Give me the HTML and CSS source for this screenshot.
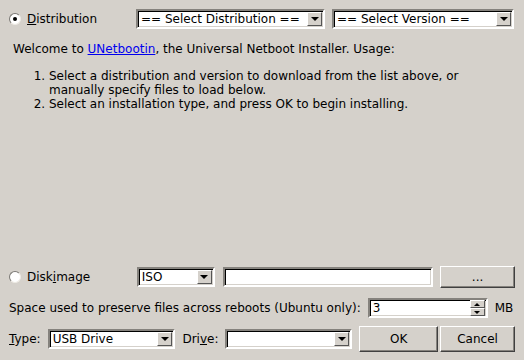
FILE: index.html
```html
<!DOCTYPE html>
<html>
<head>
<meta charset="utf-8">
<link rel="stylesheet" href="styles.css">
</head>
<body>
<div class="dialog">
  <div class="row top">
    <label class="radio-label w-dist"><span class="radio checked"></span><span><u>D</u>istribution</span></label>
    <div class="combo w-sel-dist"><span class="combo-text">== Select Distribution ==</span><span class="combo-btn"><span class="tri"></span></span></div>
    <div class="combo w-sel-ver"><span class="combo-text">== Select Version ==</span><span class="combo-btn"><span class="tri"></span></span></div>
  </div>
  <div class="desc">
    <p class="welcome">Welcome to <a href="#">UNetbootin</a>, the Universal Netboot Installer. Usage:</p>
    <ol class="steps">
      <li>Select a distribution and version to download from the list above, or manually specify files to load below.</li>
      <li>Select an installation type, and press OK to begin installing.</li>
    </ol>
  </div>
  <div class="spacer"></div>
  <div class="row disk">
    <label class="radio-label w-dist"><span class="radio"></span><span>Disk<u>i</u>mage</span></label>
    <div class="combo w-iso"><span class="combo-text">ISO</span><span class="combo-btn"><span class="tri"></span></span></div>
    <div class="field w-path"></div>
    <div class="button w-browse">...</div>
  </div>
  <div class="row space">
    <span class="label">Space used to preserve files across reboots (Ubuntu only):</span>
    <div class="spin">
      <span class="spin-text">3</span>
      <span class="spin-btns"><span class="spin-btn"><span class="tri up"></span></span><span class="spin-btn"><span class="tri small"></span></span></span>
    </div>
    <span class="label mb">MB</span>
  </div>
  <div class="row type">
    <span class="label"><u>T</u>ype:</span>
    <div class="combo w-type"><span class="combo-text">USB Drive</span><span class="combo-btn"><span class="tri"></span></span></div>
    <span class="label">Dri<u>v</u>e:</span>
    <div class="combo w-drive"><span class="combo-text"></span><span class="combo-btn"><span class="tri"></span></span></div>
    <div class="button w-ok">OK</div>
    <div class="button w-cancel">Cancel</div>
  </div>
</div>
</body>
</html>
```
FILE: styles.css
```css
html, body {
  margin: 0;
  padding: 0;
  width: 524px;
  height: 360px;
  background: #d5d1cb;
  font-family: "DejaVu Sans", sans-serif;
  font-size: 12px;
  color: #000;
  overflow: hidden;
}
.dialog {
  box-sizing: border-box;
  height: 360px;
  padding: 9px 9px 8px 9px;
  display: flex;
  flex-direction: column;
}
.row {
  display: flex;
  align-items: center;
}
.top { height: 20px; gap: 7px; }
.radio-label {
  display: flex;
  align-items: center;
  gap: 6px;
  box-sizing: border-box;
  padding-left: 0;
}
.w-dist { width: 120px; }
.radio {
  box-sizing: border-box;
  width: 12px;
  height: 12px;
  border-radius: 50%;
  background: #fff;
  border: 1px solid #7a7874;
  border-right-color: #eeeae4;
  border-bottom-color: #eeeae4;
  position: relative;
}
.radio.checked::after {
  content: "";
  position: absolute;
  left: 3px;
  top: 3px;
  width: 4px;
  height: 4px;
  border-radius: 50%;
  background: #000;
}
.combo, .field, .spin {
  box-sizing: border-box;
  display: flex;
  align-items: center;
  background: #fff;
  border: 2px solid #000;
  border-top-color: #85827d;
  border-left-color: #85827d;
  border-right-color: #fff;
  border-bottom-color: #fff;
  box-shadow: inset 1px 1px 0 #000, inset -1px -1px 0 #d5d1cb;
  height: 20px;
}
.combo-text {
  flex: 1;
  padding-left: 3px;
  white-space: nowrap;
  overflow: hidden;
}
.combo-btn, .spin-btn {
  box-sizing: border-box;
  width: 15px;
  height: 14px;
  margin-right: 1px;
  background: #d5d1cb;
  border: 1px solid #fff;
  border-right-color: #555;
  border-bottom-color: #555;
  display: flex;
  align-items: center;
  justify-content: center;
}
.tri {
  width: 0;
  height: 0;
  border-left: 4px solid transparent;
  border-right: 4px solid transparent;
  border-top: 4px solid #000;
}
.tri.up {
  border-top: 0;
  border-bottom: 3px solid #000;
  border-left-width: 3px;
  border-right-width: 3px;
}
.tri.small {
  border-top-width: 3px;
  border-left-width: 3px;
  border-right-width: 3px;
}
.w-sel-dist { width: 189px; }
.w-sel-ver { width: 182px; }
.desc { padding-left: 4px; }
.welcome { margin: 12px 0 0 0; line-height: 16px; }
a { color: #0000ee; }
.steps {
  margin: 12px 0 0 0;
  padding-left: 36px;
  line-height: 14px;
}
.spacer { flex: 1; }
.disk { gap: 8px; height: 22px; }
.w-iso { width: 78px; }
.w-path { width: 211px; }
.button {
  box-sizing: border-box;
  display: flex;
  align-items: center;
  justify-content: center;
  background: #d5d1cb;
  border: 1px solid #fff;
  border-right-color: #404040;
  border-bottom-color: #404040;
  box-shadow: inset -1px -1px 0 #85827d;
}
.w-browse { width: 75px; height: 22px; margin-left: -1px; }
.space { margin-top: 10px; height: 20px; gap: 7px; }
.spin { width: 120px; }
.spin-text { flex: 1; padding-left: 3px; }
.spin-btns { display: flex; flex-direction: column; }
.spin .spin-btn { height: 8px; }
.type { margin-top: 8px; height: 26px; gap: 7px; }
.w-type { width: 128px; }
.w-drive { width: 127px; }
.w-ok { width: 79px; height: 26px; }
.w-cancel { width: 75px; height: 26px; margin-left: -5px; }
```
